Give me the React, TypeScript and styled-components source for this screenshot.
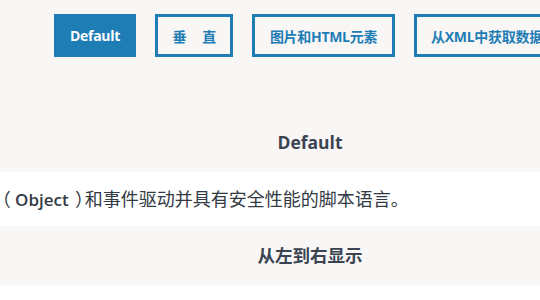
import React from "react";
import styled, { createGlobalStyle } from "styled-components";

const GlobalStyle = createGlobalStyle`
  html, body {
    margin: 0;
    padding: 0;
    background: #f8f7f6;
    overflow: hidden;
  }
  body {
    font-family: "Open Sans", "Noto Sans CJK SC", sans-serif;
  }
`;

const Page = styled.div`
  width: 620px;
  min-height: 300px;
  background: #f8f7f6;
  display: flex;
  flex-direction: column;
`;

const Toolbar = styled.div`
  display: flex;
  flex-wrap: nowrap;
  gap: 19px;
  padding: 14px 0 0 54px;
  margin-bottom: 56px;
  white-space: nowrap;
`;

const Button = styled.button<{ $active?: boolean }>`
  box-sizing: border-box;
  height: 43px;
  flex: none;
  display: flex;
  align-items: center;
  justify-content: center;
  padding: 0 ${(p) => (p.$active ? "13px" : "14.5px")};
  border: 3px solid #1f7db5;
  border-radius: 0;
  background: ${(p) => (p.$active ? "#1f7db5" : "transparent")};
  color: ${(p) => (p.$active ? "#ffffff" : "#1f7db5")};
  font-family: "Open Sans", "Noto Sans CJK SC", sans-serif;
  font-size: 14px;
  font-weight: 700;
  letter-spacing: -0.3px;
  cursor: pointer;
`;

const CharGap = styled.span`
  display: inline-block;
  width: 16px;
`;

const TitleBand = styled.div`
  height: 59px;
  display: flex;
  align-items: center;
  justify-content: center;
  background: #f8f7f6;
`;

const Title = styled.h2`
  margin: 0;
  font-size: 17.5px;
  font-weight: 700;
  color: #3b4351;
  line-height: 1;
`;

const TextRow = styled.div`
  height: 54px;
  background: #ffffff;
  display: flex;
  align-items: center;
  overflow: hidden;
`;

const Sentence = styled.p`
  margin: 0 0 0 1px;
  font-size: 18px;
  font-weight: 400;
  color: #343a44;
  white-space: nowrap;
  line-height: 1;
  font-feature-settings: "palt";
`;

const Strong = styled.span`
  font-size: 17px;
  font-weight: 600;
  padding: 0 7px 0 5px;
`;

const WhiteArea = styled.div`
  flex: 1;
  background: #ffffff;
`;

export default function App() {
  return (
    <>
      <GlobalStyle />
      <Page>
        <Toolbar>
          <Button $active>Default</Button>
          <Button>
            垂<CharGap />直
          </Button>
          <Button>图片和HTML元素</Button>
          <Button>从XML中获取数据</Button>
        </Toolbar>
        <TitleBand>
          <Title>Default</Title>
        </TitleBand>
        <TextRow>
          <Sentence>
            （<Strong>Object</Strong>）和事件驱动并具有安全性能的脚本语言。
          </Sentence>
        </TextRow>
        <TitleBand>
          <Title>从左到右显示</Title>
        </TitleBand>
        <WhiteArea />
      </Page>
    </>
  );
}
